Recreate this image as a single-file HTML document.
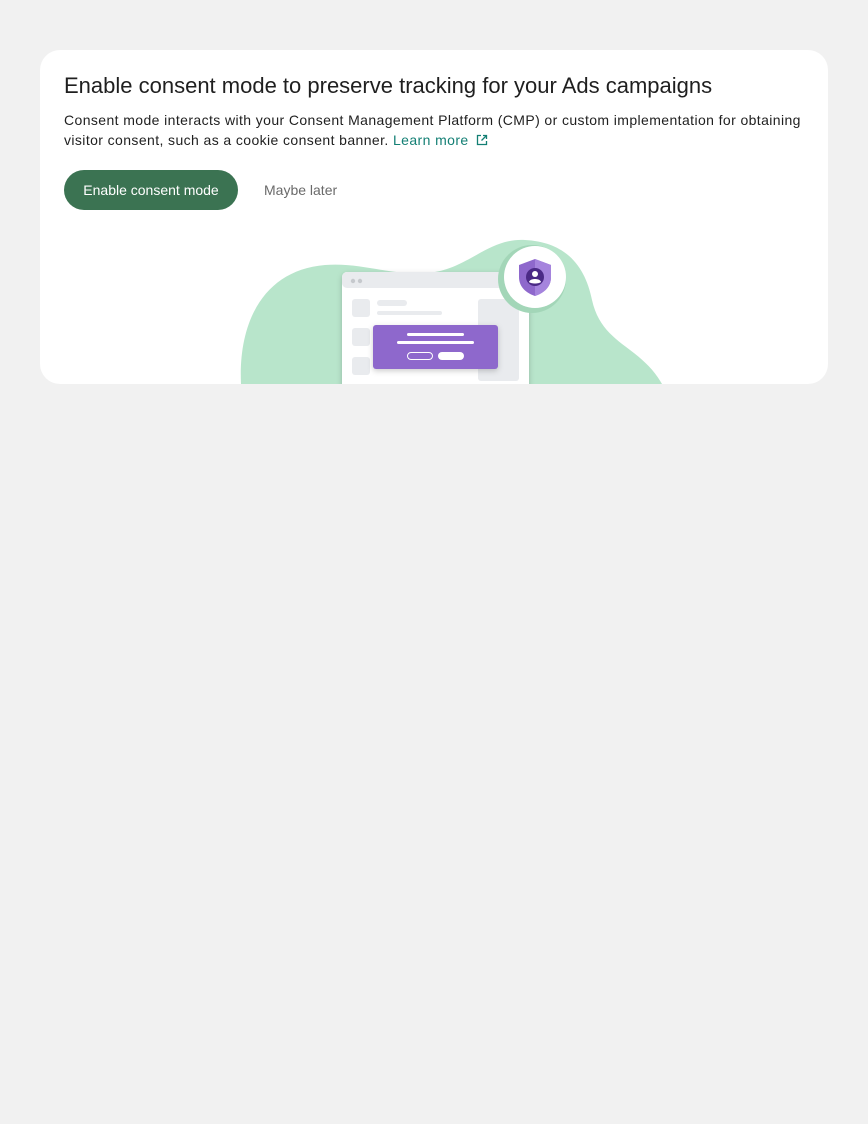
<!DOCTYPE html>
<html><head><style>
body{margin:0;background:#f1f1f1;font-family:"Liberation Sans",sans-serif;}
.card{position:absolute;left:40px;top:50px;width:788px;height:334px;background:#fff;border-radius:20px;overflow:hidden;}
h1{position:absolute;left:24px;top:23px;margin:0;font-size:22px;font-weight:normal;color:#1f1f1f;white-space:nowrap;letter-spacing:0}
p{position:absolute;left:24px;top:60px;margin:0;width:745px;font-size:14px;line-height:20px;color:#1f1f1f;letter-spacing:0.4px}
a{color:#137f74;text-decoration:none}
.btn{position:absolute;left:24px;top:120px;width:174px;height:40px;border-radius:20px;background:#3b7352;color:#fff;font-size:14px;line-height:40px;text-align:center}
.later{position:absolute;left:224px;top:120px;line-height:40px;font-size:14px;color:#6a6a6a}
svg.il{position:absolute;left:0;top:0}
</style></head><body>
<div class="card">
<h1>Enable consent mode to preserve tracking for your Ads campaigns</h1>
<p>Consent mode interacts with your Consent Management Platform (CMP) or custom implementation for obtaining visitor consent, such as a cookie consent banner. <a>Learn more <svg width="12" height="12" viewBox="0 0 12 12" style="vertical-align:-1px;margin-left:3px"><path d="M5 1.5H1.5v9h9V7M7 1.5h3.5V5M10.5 1.5L5.5 6.5" fill="none" stroke="#137f74" stroke-width="1.3"/></svg></a></p>
<div class="btn">Enable consent mode</div>
<div class="later">Maybe later</div>
<svg class="il" width="788" height="334" viewBox="40 50 788 334">
<defs><filter id="s" x="-20%" y="-20%" width="140%" height="160%"><feDropShadow dx="0" dy="2" stdDeviation="3" flood-opacity="0.2"/></filter></defs>
<path d="M241 384 C238 320 265 270 325 265 C365 262 395 278 435 272 C470 266 490 238 525 240 C565 242 585 265 592 300 C602 345 640 345 662 384 Z" fill="#b8e5cb"/>
<rect x="342" y="272" width="187" height="130" rx="5" fill="#fff" filter="url(#s)"/>
<rect x="342" y="272" width="187" height="16" rx="5" fill="#e9ebee"/>
<circle cx="353" cy="281" r="2.2" fill="#c6c9cd"/><circle cx="360" cy="281" r="2.2" fill="#c6c9cd"/>
<rect x="352" y="299" width="18" height="18" rx="3" fill="#e9ebee"/>
<rect x="352" y="328" width="18" height="18" rx="3" fill="#e9ebee"/>
<rect x="352" y="357" width="18" height="18" rx="3" fill="#e9ebee"/>
<rect x="377" y="300" width="30" height="6" rx="3" fill="#e9ebee"/>
<rect x="377" y="311" width="65" height="4" rx="2" fill="#e9ebee"/>
<rect x="478" y="299" width="41" height="82" rx="3" fill="#e9ebee"/>
<rect x="373" y="325" width="125" height="44" rx="3" fill="#8e68cc" filter="url(#s)"/>
<rect x="407" y="333" width="57" height="3" rx="1.5" fill="#fff"/>
<rect x="397" y="341" width="77" height="3" rx="1.5" fill="#fff"/>
<rect x="407.5" y="352.5" width="25" height="7" rx="3.5" fill="none" stroke="#fff"/>
<rect x="438" y="352" width="26" height="8" rx="4" fill="#fff"/>
<circle cx="532" cy="279" r="34" fill="#a3d6b8"/>
<circle cx="535" cy="277" r="31" fill="#fff"/>
<path d="M535 259 L551 265 V277 C551 287 544 293 535 296 C526 293 519 287 519 277 V265 Z" fill="#8e68cc"/>
<path d="M535 259 L551 265 V277 C551 287 544 293 535 296 Z" fill="#a584dd"/>
<circle cx="535" cy="277" r="9" fill="#4b2a86"/>
<circle cx="535" cy="274" r="3" fill="#fff"/>
<path d="M529 282 C530 278 540 278 541 282 C539 284 531 284 529 282Z" fill="#fff"/>
</svg>
</div>
</body></html>
